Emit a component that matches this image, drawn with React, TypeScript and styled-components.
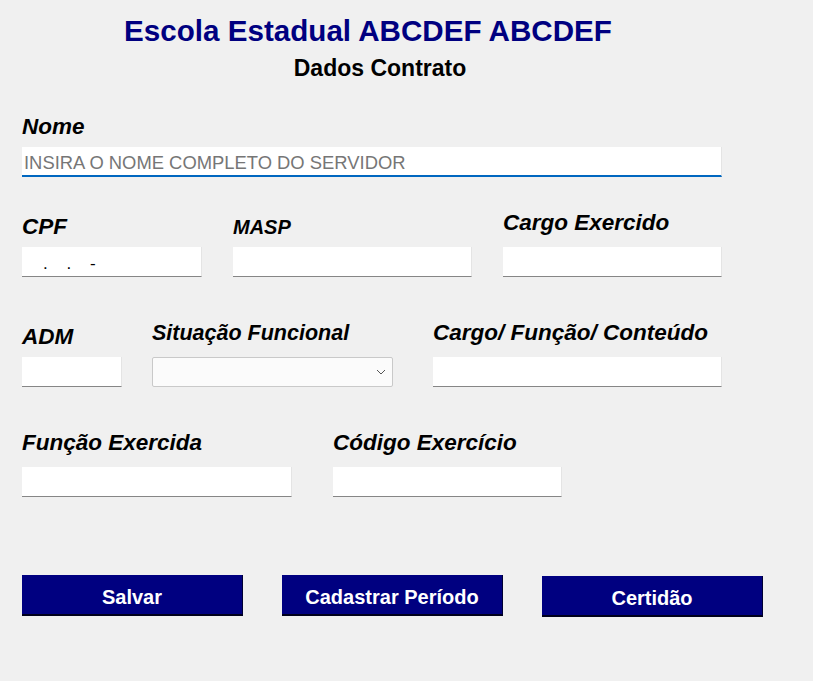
import React from "react";
import styled, { createGlobalStyle } from "styled-components";

const GlobalStyle = createGlobalStyle`
  body {
    margin: 0;
    background: #f0f0f0;
    font-family: "Liberation Sans", Arial, sans-serif;
  }
`;

const Page = styled.div`
  padding: 14px 0 40px 22px;
`;

const Header = styled.header`
  width: 716px;
  text-align: center;
`;

const Title = styled.h1`
  margin: 0;
  padding-right: 24px;
  font-size: 29.6px;
  line-height: 34px;
  font-weight: bold;
  color: #000080;
`;

const Subtitle = styled.h2`
  margin: 7px 0 0;
  font-size: 23px;
  line-height: 26px;
  font-weight: bold;
  color: #000;
`;

const Row = styled.div<{ $gap?: number; $top: number }>`
  display: flex;
  align-items: flex-end;
  gap: ${(p) => p.$gap ?? 31}px;
  margin-top: ${(p) => p.$top}px;
`;

const Field = styled.div<{ $w: number; $offset?: number }>`
  display: flex;
  flex-direction: column;
  width: ${(p) => p.$w}px;
  margin-left: ${(p) => p.$offset ?? 0}px;
`;

const Label = styled.label<{ $size?: number; $gap?: number }>`
  display: block;
  font-size: ${(p) => p.$size ?? 22.5}px;
  line-height: 26px;
  font-weight: bold;
  font-style: italic;
  color: #000;
  white-space: nowrap;
  margin-bottom: ${(p) => p.$gap ?? 11}px;
`;

const Input = styled.input<{ $focus?: boolean; $size?: number }>`
  box-sizing: border-box;
  width: 100%;
  height: 30px;
  margin: 0;
  padding: 4px 2px 0;
  border: 0;
  border-right: 1px solid #e4e4e4;
  border-bottom: ${(p) => (p.$focus ? "2px solid #0067c0" : "1px solid #868686")};
  background: #fff;
  font-family: "Liberation Sans", Arial, sans-serif;
  font-size: ${(p) => p.$size ?? 18}px;
  color: #000;
  outline: none;
  white-space: pre;

  &::placeholder {
    color: #767676;
  }
`;

const SelectWrap = styled.div`
  position: relative;
  width: 100%;
  height: 30px;
`;

const Select = styled.select`
  box-sizing: border-box;
  width: 100%;
  height: 30px;
  margin: 0;
  border: 1px solid #c9c9c9;
  border-radius: 2px;
  background: #fbfbfb;
  appearance: none;
  font-family: "Liberation Sans", Arial, sans-serif;
  font-size: 16px;
  outline: none;
`;

const Chevron = styled.svg`
  position: absolute;
  right: 7px;
  top: 12px;
  pointer-events: none;
`;

const ButtonRow = styled.div`
  display: flex;
  align-items: flex-start;
  gap: 39px;
  margin-top: 78px;
`;

const Button = styled.button<{ $drop?: number }>`
  box-sizing: border-box;
  width: 221px;
  height: 41px;
  margin-top: ${(p) => p.$drop ?? 0}px;
  padding: 5px 0 0;
  border: 0;
  border-right: 1px solid #000033;
  border-bottom: 2px solid #00001c;
  background: #000080;
  color: #fff;
  font-family: "Liberation Sans", Arial, sans-serif;
  font-size: 20px;
  font-weight: bold;
  cursor: pointer;
`;

export default function App() {
  return (
    <Page>
      <GlobalStyle />
      <Header>
        <Title>Escola Estadual ABCDEF ABCDEF</Title>
        <Subtitle>Dados Contrato</Subtitle>
      </Header>

      <Row $top={33}>
        <Field $w={700}>
          <Label $gap={7}>Nome</Label>
          <Input $focus $size={18.4} placeholder="INSIRA O NOME COMPLETO DO SERVIDOR" />
        </Field>
      </Row>

      <Row $top={33}>
        <Field $w={180}>
          <Label $gap={7}>CPF</Label>
          <Input $size={17} defaultValue="    .    .    -" />
        </Field>
        <Field $w={239}>
          <Label $gap={7} $size={20}>MASP</Label>
          <Input />
        </Field>
        <Field $w={219}>
          <Label>Cargo Exercido</Label>
          <Input />
        </Field>
      </Row>

      <Row $top={43} $gap={30}>
        <Field $w={100}>
          <Label $gap={7}>ADM</Label>
          <Input />
        </Field>
        <Field $w={241}>
          <Label $size={21.5}>Situação Funcional</Label>
          <SelectWrap>
            <Select defaultValue="">
              <option value=""></option>
            </Select>
            <Chevron width="10" height="6" viewBox="0 0 10 6">
              <path d="M1 1l4 4 4-4" fill="none" stroke="#555" strokeWidth="1" />
            </Chevron>
          </SelectWrap>
        </Field>
        <Field $w={289} $offset={10}>
          <Label>Cargo/ Função/ Conteúdo</Label>
          <Input />
        </Field>
      </Row>

      <Row $top={43} $gap={41}>
        <Field $w={270}>
          <Label>Função Exercida</Label>
          <Input />
        </Field>
        <Field $w={229}>
          <Label>Código Exercício</Label>
          <Input />
        </Field>
      </Row>

      <ButtonRow>
        <Button>Salvar</Button>
        <Button>Cadastrar Período</Button>
        <Button $drop={1}>Certidão</Button>
      </ButtonRow>
    </Page>
  );
}
